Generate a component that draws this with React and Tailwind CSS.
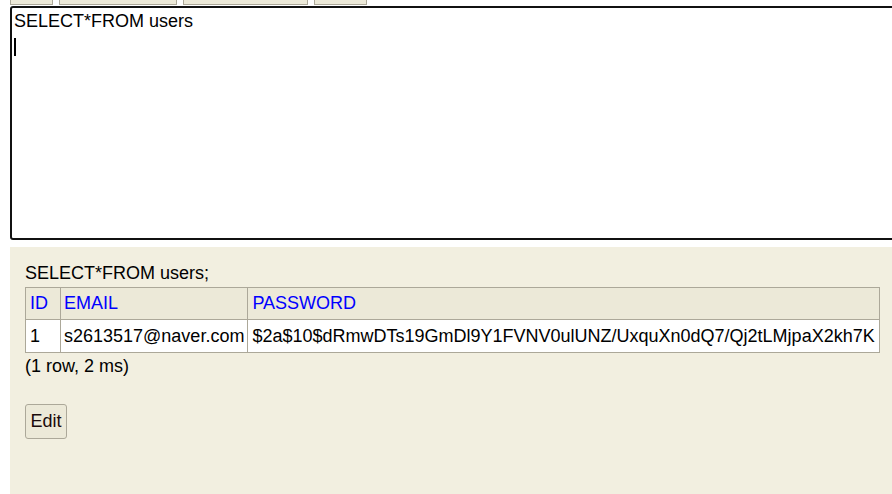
import React from 'react';

const tabs = [43, 118, 125, 53];

const rows = [
  { id: 1, email: 's2613517@naver.com', password: '$2a$10$dRmwDTs19GmDl9Y1FVNV0ulUNZ/UxquXn0dQ7/Qj2tLMjpaX2kh7K' },
];

const App = () => {
  return (
    <div className="w-[892px] h-[494px] overflow-hidden bg-white text-[18px] text-black" style={{ fontFamily: '"Liberation Sans", Arial, sans-serif' }}>
      {/* tab strip, scrolled mostly out of view */}
      <div className="flex gap-[6px] pl-[10px] h-[5px]">
        {tabs.map((w, i) => (
          <div key={i} className="h-[5px] bg-[#ece9d8] border-x border-b border-[#aca899]" style={{ width: w }} />
        ))}
      </div>

      {/* query editor */}
      <div className="ml-[10px] mt-[1px] w-[900px] h-[234px] border-2 border-[#111] rounded-tl-[3px] rounded-bl-[3px] bg-white pl-[2px] pt-[3px] leading-[21px]">
        <div>SELECT*FROM users</div>
        <div className="mt-[6px] w-[2px] h-[18px] bg-black" />
      </div>

      {/* result panel */}
      <div className="ml-[10px] mt-[7px] h-[260px] bg-[#f2efe0] pl-[15px] pt-[16px]">
        <div className="leading-[21px] mb-[3px]">SELECT*FROM users;</div>
        <table className="border-collapse">
          <thead>
            <tr className="bg-[#ece9d8]">
              <th className="w-[35px] border border-[#aca899] font-normal text-left text-[#0000ff] px-[4px] h-[32px] leading-[21px]">ID</th>
              <th className="border border-[#aca899] font-normal text-left text-[#0000ff] px-[3px] h-[32px] leading-[21px]">EMAIL</th>
              <th className="border border-[#aca899] font-normal text-left text-[#0000ff] px-[4px] h-[32px] leading-[21px]">PASSWORD</th>
            </tr>
          </thead>
          <tbody>
            {rows.map((r) => (
              <tr key={r.id} className="bg-white">
                <td className="border border-[#aca899] px-[4px] h-[33px] leading-[21px]">{r.id}</td>
                <td className="border border-[#aca899] px-[3px] h-[33px] leading-[21px]">{r.email}</td>
                <td className="border border-[#aca899] px-[4px] h-[33px] leading-[21px]">{r.password}</td>
              </tr>
            ))}
          </tbody>
        </table>
        <div className="mt-[3px] leading-[21px]">(1 row, 2 ms)</div>
        <button className="mt-[27px] w-[42px] h-[35px] bg-[#ece9d8] border border-[#aca899] rounded-[3px] leading-[21px] text-[#1a0a0a]">
          Edit
        </button>
      </div>
    </div>
  );
};

export default App;
